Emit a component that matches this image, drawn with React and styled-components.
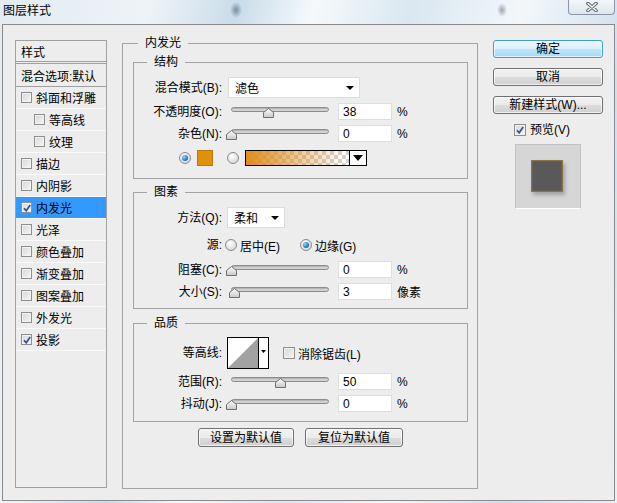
import React from 'react';
import styled, { createGlobalStyle } from 'styled-components';

const font = `"Liberation Sans", "Noto Sans CJK SC", sans-serif`;

const GlobalStyle = createGlobalStyle`
  * { box-sizing: border-box; }
  body {
    margin: 0;
    font-family: ${font};
    font-size: 12px;
    color: #000;
  }
`;

const Screen = styled.div`
  width: 617px;
  height: 503px;
  overflow: hidden;
  background:
    radial-gradient(ellipse 6px 8px at 236px 10px, rgba(70, 90, 110, 0.6), rgba(70, 90, 110, 0) 100%),
    radial-gradient(ellipse 5px 7px at 502px 10px, rgba(70, 90, 110, 0.5), rgba(70, 90, 110, 0) 100%),
    linear-gradient(105deg, #e3ebf1 0%, #eef3f7 20%, #c9dcea 32%, #f6f9fb 42%, #d9e7f1 55%, #f3f7fa 70%, #cfe0ec 85%, #eaf1f6 100%);
`;

const TitleBar = styled.div`
  height: 24px;
  display: flex;
  justify-content: space-between;
  align-items: flex-start;
`;

const Title = styled.div`
  padding: 4px 0 0 3px;
  line-height: 14px;
  font-size: 12px;
`;

const CloseButton = styled.div`
  width: 47px;
  height: 15px;
  margin-right: 2px;
  border: 1px solid #8a96a3;
  border-top: none;
  border-radius: 0 0 4px 4px;
  background: linear-gradient(#f4f7fa, #dde5ec);
  display: flex;
  align-items: center;
  justify-content: center;
`;

const Dialog = styled.div`
  margin-left: 2px;
  width: 613px;
  height: 477px;
  border: 1px solid #8a8a8a;
  background: #ededed;
  display: flex;
  align-items: flex-start;
  padding: 11px 0 0 12px;
`;

/* ---------- left list ---------- */

const StyleList = styled.div`
  width: 92px;
  height: 448px;
  margin-top: 4px;
  border: 1px solid #a0a0a0;
  display: flex;
  flex-direction: column;
`;

const ListHeader = styled.div`
  height: ${p => p.$h}px;
  padding-left: 5px;
  display: flex;
  align-items: center;
  border-bottom: ${p => p.$double ? '3px double #a0a0a0' : '1px solid #a0a0a0'};
`;

const ListItem = styled.div`
  height: 22px;
  display: flex;
  align-items: center;
  gap: 4px;
  padding-left: ${p => p.$indent ? 18 : 5}px;
  background: ${p => p.$active ? '#3399ff' : 'transparent'};
  border-bottom: 1px solid #fafafa;
`;

/* ---------- controls ---------- */

const Box = styled.span`
  width: ${p => p.$size}px;
  height: ${p => p.$size}px;
  flex-shrink: 0;
  border: 1px solid #8e8e8e;
  background: linear-gradient(135deg, #d6d6d6, #f6f6f6);
  box-shadow: inset 0 0 0 1px #f2f2f2;
  display: flex;
  align-items: center;
  justify-content: center;
`;

const Checkbox = ({ checked, size = 12 }) => (
  <Box $size={size}>
    {checked && (
      <svg width="8" height="8" viewBox="0 0 8 8">
        <path d="M1 4.2 L3.2 6.8 L7.2 1" fill="none" stroke="#3a4d92" strokeWidth="1.7" />
      </svg>
    )}
  </Box>
);

const Radio = styled.span`
  width: 12px;
  height: 12px;
  flex-shrink: 0;
  border-radius: 50%;
  border: 1px solid #8b8b8b;
  background: radial-gradient(circle at 40% 35%, #ffffff, #d9d9d9 75%);
  display: flex;
  align-items: center;
  justify-content: center;
  &::after {
    content: '';
    display: ${p => p.$on ? 'block' : 'none'};
    width: 6px;
    height: 6px;
    border-radius: 50%;
    background: radial-gradient(circle at 35% 35%, #8fdcff, #1268b3 70%);
  }
`;

const Row = styled.div`
  display: flex;
  align-items: center;
  margin-top: ${p => p.$mt || 0}px;
  height: ${p => p.$h}px;
  padding-left: ${p => p.$pl || 0}px;
`;

const Label = styled.span`
  width: 88px;
  flex-shrink: 0;
  text-align: right;
  line-height: 14px;
  white-space: nowrap;
`;

const Select = styled.div`
  width: ${p => p.$w}px;
  height: 21px;
  margin-left: ${p => p.$ml}px;
  background: #fff;
  border: 1px solid #dcdcdc;
  display: flex;
  align-items: center;
  justify-content: space-between;
  padding: 0 5px 0 6px;
`;

const DownArrow = styled.span`
  width: 0;
  height: 0;
  border-left: 4px solid transparent;
  border-right: 4px solid transparent;
  border-top: 4px solid #000;
`;

const SliderWrap = styled.div`
  position: relative;
  width: 104px;
  height: 17px;
  margin-left: 4px;
  flex-shrink: 0;
`;

const Track = styled.div`
  margin: 4px 1px 0 5px;
  height: 5px;
  border: 1px solid #8c8c8c;
  border-radius: 3px;
  background: linear-gradient(#a8a8a8, #dcdcdc 65%, #c6c6c6);
`;

const Thumb = styled.svg`
  position: absolute;
  top: 5px;
`;

const Slider = ({ value }) => (
  <SliderWrap>
    <Track />
    <Thumb width="11" height="11" viewBox="0 0 11 11" style={{ left: Math.round(value * 0.98) }}>
      <defs>
        <linearGradient id="thumbFill" x1="0" y1="0" x2="0" y2="1">
          <stop offset="0" stopColor="#ffffff" />
          <stop offset="1" stopColor="#c8c8c8" />
        </linearGradient>
      </defs>
      <path d="M5.5 0.5 L10.5 4.5 L10.5 9.5 L0.5 9.5 L0.5 4.5 Z" fill="url(#thumbFill)" stroke="#6e6e6e" />
    </Thumb>
  </SliderWrap>
);

const ValueInput = styled.input`
  width: 54px;
  height: 17px;
  margin-left: ${p => p.$ml || 8}px;
  border: 1px solid #dedede;
  background: #fff;
  padding: 0 0 0 4px;
  font-family: ${font};
  font-size: 12px;
  color: #000;
  outline: none;
`;

const Unit = styled.span`
  margin-left: 5px;
`;

const Swatch = styled.div`
  width: 16px;
  height: 16px;
  margin-left: ${p => p.$ml}px;
  background: ${p => p.$color};
  border: 1px solid #b97a06;
`;

const GradientBox = styled.div`
  width: 122px;
  height: 16px;
  margin-left: 6px;
  border: 1px solid #000;
  display: flex;
`;

const GradientFill = styled.div`
  flex: 1;
  background:
    linear-gradient(90deg, #df8d1c, rgba(223, 141, 28, 0) 96%),
    repeating-conic-gradient(#d2d2d2 0% 25%, #ffffff 0% 50%) 0 0 / 8px 8px;
`;

const GradientArrow = styled.div`
  width: 17px;
  border-left: 1px solid #000;
  background: #fff;
  display: flex;
  align-items: center;
  justify-content: center;
  & > span {
    border-left-width: 5px;
    border-right-width: 5px;
    border-top-width: 6px;
  }
`;

const Option = styled.div`
  display: flex;
  align-items: center;
  gap: 3px;
  width: ${p => p.$w ? `${p.$w}px` : 'auto'};
  margin-left: ${p => p.$ml || 0}px;
`;

const ContourBox = styled.div`
  margin-left: 5px;
  width: 42px;
  height: 32px;
  display: flex;
`;

/* ---------- groups ---------- */

const Group = styled.fieldset`
  margin: ${p => p.$mt || 0}px 0 0;
  padding: 0 0 ${p => p.$pb || 0}px;
  border: 1px solid #a3a3a3;
  min-inline-size: 0;
  height: ${p => p.$h ? `${p.$h}px` : 'auto'};
  width: ${p => p.$w ? `${p.$w}px` : 'auto'};
  margin-left: ${p => p.$ml || 0}px;
`;

const Legend = styled.legend`
  margin-left: ${p => p.$ml}px;
  padding: 0 7px;
  line-height: 14px;
  font-size: 12px;
`;

const GroupBody = styled.div`
  padding: 0 9px 0 10px;
`;

const ResetRow = styled.div`
  margin-top: 6px;
  display: flex;
  justify-content: center;
  gap: 11px;
`;

const Button = styled.div`
  width: ${p => p.$w}px;
  height: ${p => p.$h || 18}px;
  margin-top: ${p => p.$mt || 0}px;
  border: 1px solid ${p => p.$primary ? '#3c9ed8' : '#707070'};
  border-radius: 3px;
  background: ${p => p.$primary
    ? 'linear-gradient(#eaf6fd 0%, #d9f0fc 50%, #bee6fd 51%, #a7d9f5 100%)'
    : 'linear-gradient(#f2f2f2 0%, #ebebeb 50%, #dddddd 51%, #cfcfcf 100%)'};
  box-shadow: inset 0 0 0 1px rgba(255, 255, 255, 0.7);
  display: flex;
  align-items: center;
  justify-content: center;
  line-height: 14px;
  white-space: nowrap;
`;

/* ---------- right column ---------- */

const RightColumn = styled.div`
  width: 110px;
  margin-left: 15px;
  margin-top: 4px;
  display: flex;
  flex-direction: column;
`;

const PreviewToggle = styled.div`
  margin-top: 10px;
  padding-left: 21px;
  display: flex;
  align-items: center;
  gap: 4px;
  line-height: 12px;
`;

const PreviewBox = styled.div`
  width: 66px;
  height: 65px;
  margin: 8px 0 0 22px;
  background: #d6d6d6;
  border: 1px solid #c2c2c2;
  border-bottom-color: #ffffff;
  display: flex;
  align-items: center;
  justify-content: center;
`;

const PreviewSquare = styled.div`
  width: 32px;
  height: 32px;
  margin: 0 2px 2px 0;
  background: #595959;
  border: 1px solid #8a7346;
  box-shadow: inset 0 0 2px rgba(190, 140, 60, 0.5), 2px 3px 4px rgba(0, 0, 0, 0.25);
`;

const listItems = [
  { name: '斜面和浮雕' },
  { name: '等高线', indent: true },
  { name: '纹理', indent: true },
  { name: '描边' },
  { name: '内阴影' },
  { name: '内发光', checked: true, active: true },
  { name: '光泽' },
  { name: '颜色叠加' },
  { name: '渐变叠加' },
  { name: '图案叠加' },
  { name: '外发光' },
  { name: '投影', checked: true },
];

export default function App() {
  return (
    <Screen>
      <GlobalStyle />
      <TitleBar>
        <Title>图层样式</Title>
        <CloseButton>
          <svg width="14" height="10" viewBox="0 0 14 10">
            <path d="M3 1.5 L11 8.5 M11 1.5 L3 8.5" stroke="#5f6872" strokeWidth="3.6" strokeLinecap="round" />
            <path d="M3 1.5 L11 8.5 M11 1.5 L3 8.5" stroke="#f7f7f7" strokeWidth="1.6" strokeLinecap="round" />
          </svg>
        </CloseButton>
      </TitleBar>

      <Dialog>
        <StyleList>
          <ListHeader $h={23} $double>样式</ListHeader>
          <ListHeader $h={23}>混合选项:默认</ListHeader>
          {listItems.map(item => (
            <ListItem key={item.name} $indent={item.indent} $active={item.active}>
              <Checkbox checked={item.checked} size={11} />
              {item.name}
            </ListItem>
          ))}
        </StyleList>

        <Group $w={356} $h={453} $ml={15}>
          <Legend $ml={15}>内发光</Legend>
          <GroupBody>
            <Group $mt={5} $pb={12}>
              <Legend $ml={13}>结构</Legend>
              <Row $mt={8}>
                <Label>混合模式(B):</Label>
                <Select $w={132} $ml={6}>滤色<DownArrow /></Select>
              </Row>
              <Row $mt={5}>
                <Label>不透明度(O):</Label>
                <Slider value={38} />
                <ValueInput readOnly value="38" />
                <Unit>%</Unit>
              </Row>
              <Row $mt={5}>
                <Label>杂色(N):</Label>
                <Slider value={0} />
                <ValueInput readOnly value="0" />
                <Unit>%</Unit>
              </Row>
              <Row $mt={8} $h={16} $pl={45}>
                <Radio $on />
                <Swatch $ml={6} $color="#e09108" />
                <Option $ml={14}><Radio /></Option>
                <GradientBox>
                  <GradientFill />
                  <GradientArrow><DownArrow /></GradientArrow>
                </GradientBox>
              </Row>
            </Group>

            <Group $mt={6} $pb={8}>
              <Legend $ml={13}>图素</Legend>
              <Row $mt={8}>
                <Label>方法(Q):</Label>
                <Select $w={58} $ml={5}>柔和<DownArrow /></Select>
              </Row>
              <Row $mt={10} $h={14}>
                <Label>源:</Label>
                <Option $w={75} $ml={3}><Radio />居中(E)</Option>
                <Option><Radio $on />边缘(G)</Option>
              </Row>
              <Row $mt={9}>
                <Label>阻塞(C):</Label>
                <Slider value={0} />
                <ValueInput readOnly value="0" />
                <Unit>%</Unit>
              </Row>
              <Row $mt={5}>
                <Label>大小(S):</Label>
                <Slider value={3} />
                <ValueInput readOnly value="3" />
                <Unit>像素</Unit>
              </Row>
            </Group>

            <Group $mt={7} $pb={9}>
              <Legend $ml={13}>品质</Legend>
              <Row $mt={7}>
                <Label>等高线:</Label>
                <ContourBox>
                  <svg width="42" height="32" viewBox="0 0 42 32">
                    <rect x="0.5" y="0.5" width="41" height="31" fill="#fff" stroke="#000" />
                    <polygon points="1,31 31,1 31,31" fill="#a2a2a2" />
                    <line x1="31.5" y1="0.5" x2="31.5" y2="31.5" stroke="#000" />
                    <polygon points="34,13 39,13 36.5,16" fill="#000" />
                  </svg>
                </ContourBox>
                <Option $ml={14}><Checkbox />消除锯齿(L)</Option>
              </Row>
              <Row $mt={4}>
                <Label>范围(R):</Label>
                <Slider value={50} />
                <ValueInput readOnly value="50" />
                <Unit>%</Unit>
              </Row>
              <Row $mt={5}>
                <Label>抖动(J):</Label>
                <Slider value={0} />
                <ValueInput readOnly value="0" />
                <Unit>%</Unit>
              </Row>
            </Group>

            <ResetRow>
              <Button $w={96} $h={19}>设置为默认值</Button>
              <Button $w={98} $h={19}>复位为默认值</Button>
            </ResetRow>
          </GroupBody>
        </Group>

        <RightColumn>
          <Button $w={110} $primary>确定</Button>
          <Button $w={110} $mt={10}>取消</Button>
          <Button $w={110} $mt={10}>新建样式(W)...</Button>
          <PreviewToggle><Checkbox checked />预览(V)</PreviewToggle>
          <PreviewBox>
            <PreviewSquare />
          </PreviewBox>
        </RightColumn>
      </Dialog>
    </Screen>
  );
}
